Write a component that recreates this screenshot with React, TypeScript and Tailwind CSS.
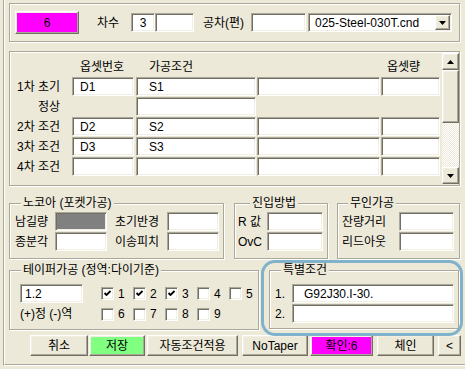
import React from "react";

const SUNKEN =
  "border border-t-[#ACA899] border-l-[#ACA899] border-r-white border-b-white shadow-[inset_1px_1px_0_#716F64,inset_-1px_-1px_0_#F1EFE2]";
const RAISED =
  "border border-t-white border-l-white border-r-[#716F64] border-b-[#716F64] shadow-[inset_-1px_-1px_0_#ACA899,inset_1px_1px_0_#F1EFE2]";
const ETCHED = "border border-[#ACA899] shadow-[inset_1px_1px_0_#fff,1px_1px_0_#fff]";

type P = { className?: string; children?: React.ReactNode };

function Field({ className = "", children, gray = false }: P & { gray?: boolean }) {
  return (
    <div
      className={`${SUNKEN} h-[19px] ${gray ? "bg-[#808080]" : "bg-white"} flex items-center overflow-hidden whitespace-nowrap shrink-0 ${className}`}
    >
      {children}
    </div>
  );
}

function Btn({ className = "", children }: P) {
  return (
    <div className={`${RAISED} flex items-center justify-center whitespace-nowrap shrink-0 ${className}`}>
      {children}
    </div>
  );
}

function Tri({ up = false }: { up?: boolean }) {
  return (
    <svg width="7" height="4" viewBox="0 0 7 4">
      <polygon points={up ? "0,4 7,4 3.5,0" : "0,0 7,0 3.5,4"} fill="#000" />
    </svg>
  );
}

function Group({ className = "", title, titleClass = "", children }: P & { title: string; titleClass?: string }) {
  return (
    <div className={`${ETCHED} relative shrink-0 ${className}`}>
      <span className={`absolute top-[-8px] px-[2px] bg-[#ECE9D8] leading-[14px] whitespace-nowrap ${titleClass}`}>{title}</span>
      {children}
    </div>
  );
}

function Check({ checked }: { checked?: boolean }) {
  return (
    <div className={`${SUNKEN} w-[13px] h-[13px] bg-white flex items-center justify-center shrink-0`}>
      {checked && (
        <svg width="9" height="9" viewBox="0 0 9 9">
          <polyline points="1.5,4 3.5,6 7.5,2" fill="none" stroke="#000" strokeWidth="1.8" />
        </svg>
      )}
    </div>
  );
}

function Cb({ n, checked }: { n: number; checked?: boolean }) {
  return (
    <div className="w-[32px] flex items-center shrink-0">
      <Check checked={checked} />
      <span className="ml-[4px]">{n}</span>
    </div>
  );
}

export default function App() {
  return (
    <div className="w-[465px] h-[369px] bg-[#ECE9D8] relative overflow-hidden text-black text-[12px] leading-[14px] font-['Liberation_Sans','Noto_Sans_CJK_KR',sans-serif]">
      <div className="ml-[3px] h-[366px] border-l border-l-[#ACA899] border-b border-b-white">
        <div className="h-full border-l border-l-white border-b border-b-[#ACA899]">
          <div className="ml-[4px] w-[451px] flex flex-col">
            {/* Top group */}
            <div className={`${ETCHED} mt-[3px] h-[39px] w-[451px] flex items-center`}>
              <Btn className="ml-[5px] w-[64px] h-[23px] bg-[#FF00FF]">6</Btn>
              <span className="ml-[18px] w-[34px] shrink-0">차수</span>
              <Field className="w-[24px] justify-center">3</Field>
              <Field className="w-[39px]" />
              <span className="ml-[9px] w-[48px] shrink-0 whitespace-nowrap">공차(편)</span>
              <Field className="w-[55px]" />
              <div className={`${SUNKEN} ml-[2px] w-[144px] h-[19px] bg-white flex items-center p-[1px] shrink-0`}>
                <span className="flex-1 pl-[5px] whitespace-nowrap overflow-hidden">025-Steel-030T.cnd</span>
                <Btn className="w-[15px] h-[15px] bg-[#ECE9D8]">
                  <Tri />
                </Btn>
              </div>
            </div>

            {/* Grid group */}
            <div className={`${ETCHED} mt-[9px] h-[135px] w-[451px] flex`}>
              <div className="flex-1 pl-[7px] flex flex-col">
                <div className="h-[25px] pt-[5px] flex items-center">
                  <div className="w-[55px] shrink-0" />
                  <div className="w-[62px] pl-[8px] shrink-0">옵셋번호</div>
                  <div className="ml-[2px] w-[120px] pl-[13px] shrink-0">가공조건</div>
                  <div className="ml-[1px] w-[123px] shrink-0" />
                  <div className="ml-[1px] w-[59px] pl-[6px] shrink-0">옵셋량</div>
                </div>
                {[
                  ["1차 초기", "D1", "S1"],
                  null,
                  ["2차 조건", "D2", "S2"],
                  ["3차 조건", "D3", "S3"],
                  ["4차 조건", "", ""],
                ].map((r, i) =>
                  r === null ? (
                    <div key={i} className="h-[19px] mb-[1px] flex items-center">
                      <span className="w-[55px] pl-[21px] shrink-0">정상</span>
                      <div className="w-[62px] shrink-0" />
                      <Field className="ml-[2px] w-[120px]" />
                    </div>
                  ) : (
                    <div key={i} className="h-[19px] mb-[1px] flex items-center">
                      <span className="w-[55px] shrink-0 whitespace-nowrap">{r[0]}</span>
                      <Field className="w-[62px] pl-[7px]">{r[1]}</Field>
                      <Field className="ml-[2px] w-[120px] pl-[12px]">{r[2]}</Field>
                      <Field className="ml-[1px] w-[123px]" />
                      <Field className="ml-[1px] w-[59px]" />
                    </div>
                  )
                )}
              </div>
              <div className="w-[17px] my-[1px] flex flex-col shrink-0">
                <Btn className="h-[17px] bg-[#ECE9D8]">
                  <Tri up />
                </Btn>
                <div className={`${RAISED} h-[53px] bg-[#ECE9D8]`} />
                <div className="flex-1 bg-[repeating-conic-gradient(#ffffff_0_25%,#ECE9D8_0_50%)] bg-[length:2px_2px]" />
                <Btn className="h-[17px] bg-[#ECE9D8]">
                  <Tri />
                </Btn>
              </div>
            </div>

            {/* Row of three groups */}
            <div className="mt-[17px] h-[56px] flex">
              <Group title="노코아 (포켓가공)" titleClass="left-[11px]" className="w-[215px] h-full pt-[8px] pl-[5px]">
                <div className="h-[19px] mb-[1px] flex items-center">
                  <span className="w-[40px] shrink-0">남길량</span>
                  <Field className="w-[52px]" gray />
                  <span className="w-[60px] pl-[8px] shrink-0">초기반경</span>
                  <Field className="w-[52px]" />
                </div>
                <div className="h-[19px] flex items-center">
                  <span className="w-[40px] shrink-0">종분각</span>
                  <Field className="w-[52px]" />
                  <span className="w-[60px] pl-[8px] shrink-0">이송피치</span>
                  <Field className="w-[52px]" />
                </div>
              </Group>
              <Group title="진입방법" titleClass="left-[15px]" className="ml-[10px] w-[94px] h-full pt-[8px] pl-[3px]">
                <div className="h-[19px] mb-[1px] flex items-center">
                  <span className="w-[29px] shrink-0 whitespace-nowrap">R 값</span>
                  <Field className="w-[56px]" />
                </div>
                <div className="h-[19px] flex items-center">
                  <span className="w-[29px] shrink-0">OvC</span>
                  <Field className="w-[56px]" />
                </div>
              </Group>
              <Group title="무인가공" titleClass="left-[10px]" className="ml-[9px] w-[123px] h-full pt-[8px] pl-[4px]">
                <div className="h-[19px] mb-[1px] flex items-center">
                  <span className="w-[57px] shrink-0">잔량거리</span>
                  <Field className="w-[55px]" />
                </div>
                <div className="h-[19px] flex items-center">
                  <span className="w-[57px] shrink-0">리드아웃</span>
                  <Field className="w-[55px]" />
                </div>
              </Group>
            </div>

            {/* Taper + special */}
            <div className="mt-[11px] h-[60px] flex items-start">
              <Group title="테이퍼가공 (정역:다이기준)" titleClass="left-[11px]" className="w-[250px] h-[60px] pt-[13px] pl-[10px] flex">
                <div className="w-[63px] flex flex-col shrink-0">
                  <Field className="w-[63px] mb-[1px] pl-[4px]">1.2</Field>
                  <div className="h-[20px] flex items-center whitespace-nowrap">(+)정 (-)역</div>
                </div>
                <div className="ml-[18px] flex flex-col">
                  <div className="h-[19px] mb-[1px] flex items-center">
                    <Cb n={1} checked />
                    <Cb n={2} checked />
                    <Cb n={3} checked />
                    <Cb n={4} />
                    <Cb n={5} />
                  </div>
                  <div className="h-[20px] flex items-center">
                    <Cb n={6} />
                    <Cb n={7} />
                    <Cb n={8} />
                    <Cb n={9} />
                  </div>
                </div>
              </Group>
              <Group title="특별조건" titleClass="left-[11px]" className="ml-[10px] w-[190px] h-[59px] pt-[13px] pl-[5px]">
                <div className="h-[19px] mb-[1px] flex items-center">
                  <span className="w-[17px] shrink-0">1.</span>
                  <Field className="w-[162px] pl-[11px]">G92J30.I-30.</Field>
                </div>
                <div className="h-[19px] flex items-center">
                  <span className="w-[17px] shrink-0">2.</span>
                  <Field className="w-[162px]" />
                </div>
              </Group>
            </div>

            {/* Buttons */}
            <div className="mt-[5px] h-[21px] flex">
              <Btn className="ml-[21px] w-[58px] h-[21px] bg-[#ECE9D8]">취소</Btn>
              <Btn className="ml-[1px] w-[56px] h-[21px] bg-[#80FF80]">저장</Btn>
              <Btn className="ml-[2px] w-[91px] h-[21px] bg-[#ECE9D8]">자동조건적용</Btn>
              <Btn className="ml-[4px] w-[66px] h-[21px] bg-[#ECE9D8]">NoTaper</Btn>
              <Btn className="ml-[2px] w-[63px] h-[21px] bg-[#FF00FF]">확인:6</Btn>
              <Btn className="ml-[4px] w-[57px] h-[21px] bg-[#ECE9D8]">체인</Btn>
              <Btn className="ml-[4px] w-[23px] h-[21px] bg-[#ECE9D8]">&lt;</Btn>
            </div>
          </div>
        </div>
      </div>

      {/* Highlight annotation */}
      <div className="absolute left-[261px] top-[260px] w-[202px] h-[76px] border-[3px] border-[#80B2CC] rounded-[14px] pointer-events-none" />
    </div>
  );
}
